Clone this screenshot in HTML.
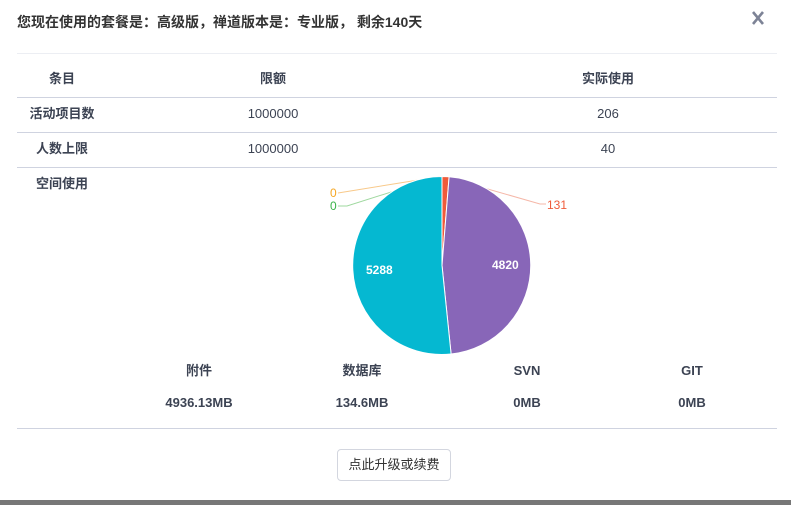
<!DOCTYPE html>
<html><head><meta charset="utf-8"><style>
*{margin:0;padding:0;box-sizing:border-box}
body{width:791px;height:505px;background:#fff;font-family:"Liberation Sans","Noto Sans CJK SC",sans-serif;color:#3c4353;position:relative;overflow:hidden;font-size:13px}
.a{position:absolute;white-space:nowrap;line-height:16px;height:16px}
.b{font-weight:bold}
.c{transform:translateX(-50%)}
.hl{position:absolute;left:17px;width:760px;height:1px;background:#cfd3e0}
</style></head><body>
<div class="a b" style="left:17px;top:14px;font-size:14px;color:#333">您现在使用的套餐是：高级版，禅道版本是：专业版， 剩余140天</div>
<svg class="a" style="left:750px;top:10px;height:16px" width="16" height="16" viewBox="0 0 16 16"><path d="M3 2L13 14M13 2L3 14" stroke="#7d8396" stroke-width="2.6"/></svg>
<div class="hl" style="top:53px;background:#eceef3"></div>

<div class="a b c" style="left:62px;top:71px">条目</div>
<div class="a b c" style="left:273px;top:71px">限额</div>
<div class="a b c" style="left:608px;top:71px">实际使用</div>
<div class="hl" style="top:97px"></div>
<div class="a b c" style="left:62px;top:106px">活动项目数</div>
<div class="a c" style="left:273px;top:106px">1000000</div>
<div class="a c" style="left:608px;top:106px">206</div>
<div class="hl" style="top:132px"></div>
<div class="a b c" style="left:62px;top:141px">人数上限</div>
<div class="a c" style="left:273px;top:141px">1000000</div>
<div class="a c" style="left:608px;top:141px">40</div>
<div class="hl" style="top:167px"></div>
<div class="a b c" style="left:62px;top:176px">空间使用</div>

<svg style="position:absolute;left:0;top:0" width="791" height="360">
<path d="M338 193L440 176.5" stroke="#f8c98a" stroke-width="1" fill="none"/>
<path d="M338 206L347 206L440 176.5" stroke="#9fd89f" stroke-width="1" fill="none"/>
<path d="M446 177L540 204L546 204" stroke="#f5b7a8" stroke-width="1" fill="none"/>
<path d="M442 265.5L442 176.5A89 89 0 0 1 449.1 176.8Z" fill="#ef5b3a" stroke="#fff" stroke-width="1"/>
<path d="M442 265.5L449.1 176.8A89 89 0 0 1 451.1 354Z" fill="#8866b8" stroke="#fff" stroke-width="1"/>
<path d="M442 265.5L451.1 354A89 89 0 1 1 442 176.5Z" fill="#05b8d1" stroke="#fff" stroke-width="1"/>
<text x="330" y="197" fill="#f5a623" font-size="12" font-family="Liberation Sans">0</text>
<text x="330" y="210" fill="#3bb34a" font-size="12" font-family="Liberation Sans">0</text>
<text x="547" y="209" fill="#ef5b3a" font-size="12" font-family="Liberation Sans">131</text>
<text x="366" y="274" fill="#fff" font-size="12" font-weight="bold" font-family="Liberation Sans">5288</text>
<text x="492" y="269" fill="#fff" font-size="12" font-weight="bold" font-family="Liberation Sans">4820</text>
</svg>

<div class="a b c" style="left:199px;top:363px">附件</div>
<div class="a b c" style="left:362px;top:363px">数据库</div>
<div class="a b c" style="left:527px;top:363px">SVN</div>
<div class="a b c" style="left:692px;top:363px">GIT</div>
<div class="a b c" style="left:199px;top:395px">4936.13MB</div>
<div class="a b c" style="left:362px;top:395px">134.6MB</div>
<div class="a b c" style="left:527px;top:395px">0MB</div>
<div class="a b c" style="left:692px;top:395px">0MB</div>
<div class="hl" style="top:428px"></div>

<div style="position:absolute;left:337px;top:449px;width:114px;height:32px;border:1px solid #d3d6df;border-radius:4px;text-align:center;line-height:30px;color:#333">点此升级或续费</div>
<div style="position:absolute;left:0;top:500px;width:791px;height:5px;background:#777"></div>
</body></html>
